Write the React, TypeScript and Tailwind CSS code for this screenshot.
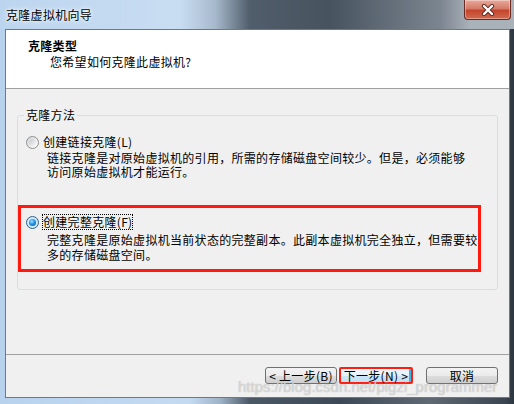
import React from 'react';

function Radio({ checked }: { checked?: boolean }) {
  if (checked) {
    return (
      <span className="flex size-[13px] shrink-0 items-center justify-center rounded-full border border-[#2c628b] bg-[radial-gradient(circle,#eaf6fd_0%,#bfe0f7_100%)]">
        <span className="size-[7px] rounded-full bg-[radial-gradient(circle_at_40%_35%,#a6e0ff_0%,#2393e6_45%,#0b4f96_100%)]" />
      </span>
    );
  }
  return (
    <span className="flex size-[13px] shrink-0 items-center justify-center rounded-full border border-[#8e8f8f] bg-[linear-gradient(135deg,#d6d6d6,#fdfdfd)]">
      <span className="size-[7px] rounded-full bg-[linear-gradient(135deg,#c4c8ce,#f8f8f8)]" />
    </span>
  );
}

export default function App() {
  return (
    <div className="relative h-[404px] w-[514px] overflow-hidden bg-[linear-gradient(to_right,#b8d2ee_0px,#c4daf1_190px,#9fb3c7_220px,#4a5765_250px,#3d4956_340px,#5e6974_430px,#3a4551_505px,#2c3640_514px)] font-['Noto_Sans_CJK_SC',sans-serif] text-[12px] tracking-[0.3px] text-black">
      {/* Title bar */}
      <div className="flex h-[29px] items-center justify-between bg-[linear-gradient(to_right,#bcd5ef_0px,#c9ddf2_180px,#a7bacd_215px,#505d6a_250px,#47535f_330px,#7b8590_440px,#a9b1b9_470px)]">
        <span className="pl-[6px] leading-[14px] [text-shadow:0_0_6px_#ffffff,0_0_3px_#ffffff]">克隆虚拟机向导</span>
        <div className="mr-[3px] flex h-[20px] w-[47px] items-center justify-center self-start rounded-b-[4px] border border-t-0 border-[#6a2b22] bg-[linear-gradient(#e9aa9c_0%,#d47a66_45%,#c4452d_55%,#d26a50_100%)] shadow-[inset_0_0_0_1px_rgba(255,255,255,0.35)]">
          <svg width="14" height="12" viewBox="0 0 14 12">
            <path d="M3 2 L11 10 M11 2 L3 10" stroke="#5a2a22" strokeWidth="4.2" strokeLinecap="round" />
            <path d="M3 2 L11 10 M11 2 L3 10" stroke="#ffffff" strokeWidth="2.4" strokeLinecap="round" />
          </svg>
        </div>
      </div>

      {/* Client area */}
      <div className="ml-[5px] flex h-[369px] w-[505px] flex-col border border-[#6b7988]">
        <div className="h-[59px] border-b border-[#a0a0a0] bg-white pt-[9px]">
          <div className="pl-[22px] font-bold leading-[14px]">克隆类型</div>
          <div className="mt-[2px] pl-[44px] leading-[14px]">您希望如何克隆此虚拟机?</div>
        </div>

        <div className="flex flex-1 flex-col bg-[#f0f0f0]">
          <div className="h-[265px] pl-[11px] pr-[12px] pt-[19px]">
            <fieldset className="m-0 rounded-[3px] border border-[#d5dfe5] p-0 pb-[17px]">
              <legend className="ml-[6px] px-[2px] leading-[14px]">克隆方法</legend>

              <div className="mt-[13px] flex items-center gap-[3px] pl-[8px] leading-[14px]">
                <Radio />
                <span className="ml-[1px]">创建链接克隆(L)</span>
              </div>
              <div className="mt-[2px] whitespace-nowrap pl-[29px] leading-[14px]">
                <div>链接克隆是对原始虚拟机的引用，所需的存储磁盘空间较少。但是，必须能够</div>
                <div>访问原始虚拟机才能运行。</div>
              </div>

              <div className="mr-[16px] mt-[26px] border-[3px] border-[#ff1a0f] pb-[7px] pl-[5px] pt-[6px]">
                <div className="flex items-center gap-[3px] leading-[14px]">
                  <Radio checked />
                  <span className="border border-dotted border-black">创建完整克隆(F)</span>
                </div>
                <div className="mt-[2px] whitespace-nowrap pl-[21px] leading-[15px]">
                  <div>完整克隆是原始虚拟机当前状态的完整副本。此副本虚拟机完全独立，但需要较</div>
                  <div>多的存储磁盘空间。</div>
                </div>
              </div>
            </fieldset>
          </div>

          <div className="border-t border-[#a0a0a0]" />

          <div className="flex flex-1 items-start justify-end pr-[11px] pt-[12px]">
            <button className="h-[17px] w-[72px] rounded-[3px] border border-[#707070] bg-[linear-gradient(#f3f3f3_0%,#ebebeb_50%,#dddddd_51%,#cfcfcf_100%)] leading-none">
              {'< 上一步(B)'}
            </button>
            <button className="ml-[2px] h-[17px] w-[74px] rounded-[2px] border-2 border-[#ff1f10] bg-[linear-gradient(#f0f8fd_0%,#e3f1fb_50%,#cfe7f7_51%,#bfe0f5_100%)] leading-none shadow-[inset_-2px_0_0_#38b7e6]">
              {'下一步(N) >'}
            </button>
            <button className="ml-[13px] h-[17px] w-[72px] rounded-[3px] border border-[#707070] bg-[linear-gradient(#f3f3f3_0%,#ebebeb_50%,#dddddd_51%,#cfcfcf_100%)] leading-none">
              取消
            </button>
          </div>
        </div>
      </div>

      {/* Watermark */}
      <span className="pointer-events-none absolute left-[238px] top-[376px] font-['Liberation_Sans',sans-serif] text-[15px] tracking-normal text-white/50 [text-shadow:0_0_1px_#a0a0a0]">
        https://blog.csdn.net/pigzi_programmer
      </span>
    </div>
  );
}
